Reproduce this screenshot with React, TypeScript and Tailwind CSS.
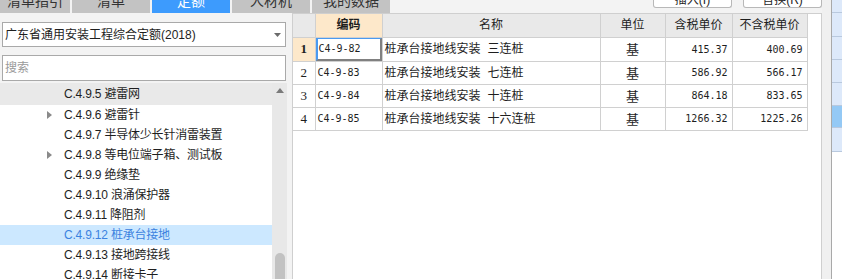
import { ChevronDown } from 'lucide-react';

const tabs = [
  { label: '清单指引', w: 'w-[70px]' },
  { label: '清单', w: 'w-[78px]' },
  { label: '定额', w: 'w-[78px]', active: true },
  { label: '人材机', w: 'w-[78px]' },
  { label: '我的数据', w: 'w-[78px]' },
];

const tree = [
  { label: 'C.4.9.5 避雷网', head: true },
  { label: 'C.4.9.6 避雷针', arrow: true },
  { label: 'C.4.9.7 半导体少长针消雷装置' },
  { label: 'C.4.9.8 等电位端子箱、测试板', arrow: true },
  { label: 'C.4.9.9 绝缘垫' },
  { label: 'C.4.9.10 浪涌保护器' },
  { label: 'C.4.9.11 降阻剂' },
  { label: 'C.4.9.12 桩承台接地', selected: true },
  { label: 'C.4.9.13 接地跨接线' },
  { label: 'C.4.9.14 断接卡子' },
];

const rows = [
  { code: 'C4-9-82', name: '三连桩', tax: '415.37', noTax: '400.69' },
  { code: 'C4-9-83', name: '七连桩', tax: '586.92', noTax: '566.17' },
  { code: 'C4-9-84', name: '十连桩', tax: '864.18', noTax: '833.65' },
  { code: 'C4-9-85', name: '十六连桩', tax: '1266.32', noTax: '1225.26' },
];

const cjk = "font-['Liberation_Sans','Noto_Sans_CJK_SC',sans-serif]";
const mono = "font-['DejaVu_Sans_Mono',monospace]";

export default function App() {
  return (
    <div className={`w-[842px] h-[279px] overflow-hidden bg-[#f3f3f3] flex flex-col ${cjk} text-[12px] text-[#1e1e1e]`}>
      {/* top strip */}
      <div className="h-[13px] flex shrink-0">
        <div className="flex gap-[2px] overflow-hidden">
          {tabs.map((t) => (
            <div
              key={t.label}
              className={`${t.w} h-[13px] flex justify-center items-end overflow-hidden ${t.active ? 'bg-[#3d9bfd] text-white' : 'bg-[#c3c3c3] text-[#333]'}`}
            >
              <span className="text-[14px] leading-[20px] mb-[2px]">{t.label}</span>
            </div>
          ))}
        </div>
        <div className="flex-1 flex justify-end items-start pr-[20px] gap-[11px]">
          <div className="w-[79px] h-[8px] bg-white border border-t-0 border-[#b8b8b8] rounded-b-[3px] flex justify-center items-end overflow-hidden">
            <span className="text-[12px] leading-[16px] mb-[-1px]">插入(I)</span>
          </div>
          <div className="w-[79px] h-[8px] bg-white border border-t-0 border-[#b8b8b8] rounded-b-[3px] flex justify-center items-end overflow-hidden">
            <span className="text-[12px] leading-[16px] mb-[-1px]">替换(R)</span>
          </div>
        </div>
      </div>

      <div className="flex-1 flex min-h-0">
        {/* left panel */}
        <div className="w-[292px] shrink-0 flex flex-col">
          <div className="mt-[9px] ml-[2px] w-[284px] h-[25px] bg-white border border-[#a9a9a9] flex items-center pl-[2px] pr-[4px]">
            <span className="flex-1 text-[12px]">广东省通用安装工程综合定额(2018)</span>
            <svg width="7" height="4" viewBox="0 0 7 4"><path d="M0 0h7L3.5 4z" fill="#6b6b6b" /></svg>
          </div>
          <div className="mt-[8px] ml-[2px] w-[284px] h-[26px] bg-white border border-[#a9a9a9] flex items-center pl-[2px]">
            <span className="text-[12px] text-[#9a9a9a]">搜索</span>
          </div>
          <div className="mt-[2px] w-[287px] flex-1 bg-white flex min-h-0 relative">
            <div className="flex-1 flex flex-col">
              {tree.map((n) => (
                <div
                  key={n.label}
                  className={`${n.head ? 'h-[22px] bg-[#e9e9e9]' : 'h-[20px]'} ${n.selected ? 'bg-[#cce8ff] text-[#3b82e0]' : ''} shrink-0 flex items-center pl-[47px]`}
                >
                  <span className="w-[17px] flex">
                    {n.arrow && (
                      <svg width="5" height="8" viewBox="0 0 5 8"><path d="M0 0l5 4-5 4z" fill="#8a8a8a" /></svg>
                    )}
                  </span>
                  <span className="text-[12px] tracking-[-0.2px]">{n.label}</span>
                </div>
              ))}
            </div>
            <div className="w-[15px] bg-[#e8e8e8] flex flex-col items-center">
              <svg className="mt-[5px]" width="8" height="5" viewBox="0 0 8 5"><path d="M0 5L4 0l4 5z" fill="#7a7a7a" /></svg>
              <div className="mt-auto w-[10px] h-[26px] rounded-t-[5px] bg-[#c2c2c2]" />
            </div>
          </div>
        </div>

        {/* table pane */}
        <div className="w-[530px] shrink-0 bg-white border-l border-t border-r border-[#cfcfcf]">
          <table className="border-collapse table-fixed w-[514px] text-[12px]">
            <colgroup>
              <col className="w-[22px]" />
              <col className="w-[67px]" />
              <col className="w-[218px]" />
              <col className="w-[65px]" />
              <col className="w-[67px]" />
              <col className="w-[75px]" />
            </colgroup>
            <thead>
              <tr className="h-[23px]">
                <th className="border border-t-0 border-l-0 border-[#d0d0d0] bg-[#e9e9e9]" />
                <th className="border border-t-0 border-[#d0d0d0] bg-[#fde8ca] font-bold">编码</th>
                <th className="border border-t-0 border-[#d0d0d0] bg-[#e9e9e9] font-normal">名称</th>
                <th className="border border-t-0 border-[#d0d0d0] bg-[#e9e9e9] font-normal">单位</th>
                <th className="border border-t-0 border-[#d0d0d0] bg-[#e9e9e9] font-normal">含税单价</th>
                <th className="border border-t-0 border-[#d0d0d0] bg-[#e9e9e9] font-normal">不含税单价</th>
              </tr>
            </thead>
            <tbody>
              {rows.map((r, i) => (
                <tr key={r.code} className="h-[23px]">
                  <td className={`border border-l-0 border-[#d0d0d0] text-center font-['Liberation_Serif',serif] text-[13px] ${i === 0 ? 'bg-[#fde8ca] font-bold' : ''}`}>
                    {i + 1}
                  </td>
                  <td className={`p-0 border border-[#d0d0d0] ${mono} text-[10px]`}>
                    {i === 0 ? (
                      <div className="h-[23px] flex items-center pl-[1px] border-l-2 border-t border-l-[#4a9af0] border-t-[#4a9af0] border-r-2 border-b-2 border-r-[#808080] border-b-[#808080]">
                        {r.code}
                      </div>
                    ) : (
                      <div className="pl-[2px]">{r.code}</div>
                    )}
                  </td>
                  <td className="border border-[#d0d0d0] pl-[2px] text-[12px]">
                    桩承台接地线安装<span className="ml-[7px]">{r.name}</span>
                  </td>
                  <td className="border border-[#d0d0d0] text-center text-[13px] font-['Noto_Sans_CJK_SC',sans-serif]">基</td>
                  <td className={`border border-[#d0d0d0] text-right pr-[4px] ${mono} text-[10px]`}>{r.tax}</td>
                  <td className={`border border-[#d0d0d0] text-right pr-[4px] ${mono} text-[10px]`}>{r.noTax}</td>
                </tr>
              ))}
            </tbody>
          </table>
        </div>

        {/* right strip */}
        <div className="w-[10px] shrink-0 bg-[#f0f0f0] border-r border-[#a9a9a9] -mt-[13px]" />
        <div className="flex-1 -mt-[13px] flex flex-col bg-white">
          {[13, 24, 23, 23, 23, 22, 24].map((h, i) => (
            <div
              key={i}
              style={{ height: h }}
              className={`shrink-0 border-b border-[#b9c9de] ${i === 5 ? 'bg-[#94c9f5]' : 'bg-[#dde9fa]'}`}
            />
          ))}
        </div>
      </div>
    </div>
  );
}
